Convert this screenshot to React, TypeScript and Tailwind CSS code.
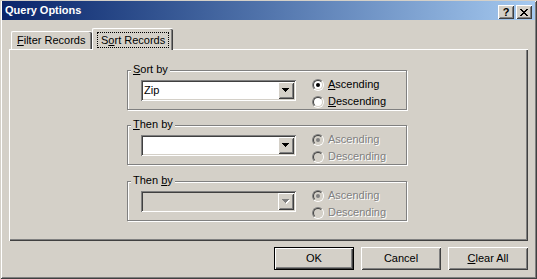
import React from "react";

const raised =
  "shadow-[inset_1px_1px_0_#fff,inset_-1px_-1px_0_#404040,inset_2px_2px_0_#d4d0c8,inset_-2px_-2px_0_#808080]";
const sunken =
  "shadow-[inset_1px_1px_0_#808080,inset_-1px_-1px_0_#fff,inset_2px_2px_0_#404040,inset_-2px_-2px_0_#d4d0c8]";
const disabledText = "text-[#808080] [text-shadow:1px_1px_0_#fff]";

function Pixels({ rows, color, x = 0, y = 0 }: { rows: string[]; color: string; x?: number; y?: number }) {
  const rects: React.ReactElement[] = [];
  rows.forEach((r, j) => {
    for (let i = 0; i < r.length; i++) {
      if (r[i] === "X") rects.push(<rect key={`${i}-${j}`} x={x + i} y={y + j} width={1} height={1} fill={color} />);
    }
  });
  return <>{rects}</>;
}

const arrowRows = ["XXXXXXX", ".XXXXX.", "..XXX..", "...X..."];
const closeRows = ["XX....XX", ".XX..XX.", "..XXXX..", "...XX...", "..XXXX..", ".XX..XX.", "XX....XX"];

function TitleBtn({ children }: { children: React.ReactNode }) {
  return (
    <div className={`w-[16px] h-[14px] bg-[#d4d0c8] flex items-center justify-center ${raised}`}>{children}</div>
  );
}

function Radio({ checked, disabled }: { checked?: boolean; disabled?: boolean }) {
  return (
    <span className="relative block w-[12px] h-[12px] shrink-0 rounded-full border border-t-[#808080] border-l-[#808080] border-r-white border-b-white">
      <span
        className={`absolute inset-0 rounded-full border border-t-[#404040] border-l-[#404040] border-r-[#d4d0c8] border-b-[#d4d0c8] ${
          disabled ? "bg-[#d4d0c8]" : "bg-white"
        }`}
      />
      {checked && (
        <span
          className={`absolute left-[3px] top-[3px] w-[4px] h-[4px] rounded-full ${
            disabled ? "bg-[#808080]" : "bg-black"
          }`}
        />
      )}
    </span>
  );
}

function Combo({ value, disabled }: { value?: string; disabled?: boolean }) {
  return (
    <div className={`w-[155px] h-[21px] flex p-[2px] mt-[9px] ${sunken} ${disabled ? "bg-[#d4d0c8]" : "bg-white"}`}>
      <div className="flex-1 pl-[1px] leading-[17px]">{value}</div>
      <div className={`w-[16px] h-[17px] flex items-center justify-center bg-[#d4d0c8] ${raised}`}>
        <svg width="8" height="5" className="block">
          {disabled ? (
            <>
              <Pixels rows={arrowRows} color="#ffffff" x={1} y={1} />
              <Pixels rows={arrowRows} color="#808080" />
            </>
          ) : (
            <Pixels rows={arrowRows} color="#000000" />
          )}
        </svg>
      </div>
    </div>
  );
}

function RadioRow({
  label,
  checked,
  disabled,
}: {
  label: React.ReactNode;
  checked?: boolean;
  disabled?: boolean;
}) {
  return (
    <div className="flex items-center h-[17px] gap-[4px]">
      <Radio checked={checked} disabled={disabled} />
      <span className={disabled ? disabledText : ""}>{label}</span>
    </div>
  );
}

function Group({
  legend,
  value,
  comboDisabled,
  radiosDisabled,
  className,
}: {
  legend: React.ReactNode;
  value?: string;
  comboDisabled?: boolean;
  radiosDisabled?: boolean;
  className?: string;
}) {
  return (
    <div
      className={`relative w-[280px] h-[40px] border border-[#808080] shadow-[inset_1px_1px_0_#fff,1px_1px_0_#fff] flex items-start pl-[13px] ${
        className ?? ""
      }`}
    >
      <span className="absolute left-[3px] top-[-8px] px-[2px] leading-[13px] bg-[#d4d0c8]">{legend}</span>
      <Combo value={value} disabled={comboDisabled} />
      <div className="flex flex-col ml-[16px] mt-[5px]">
        <RadioRow
          checked
          disabled={radiosDisabled}
          label={
            radiosDisabled ? (
              "Ascending"
            ) : (
              <>
                <span className="underline">A</span>scending
              </>
            )
          }
        />
        <RadioRow
          disabled={radiosDisabled}
          label={
            radiosDisabled ? (
              "Descending"
            ) : (
              <>
                <span className="underline">D</span>escending
              </>
            )
          }
        />
      </div>
    </div>
  );
}

function Button({ children, isDefault }: { children: React.ReactNode; isDefault?: boolean }) {
  return (
    <div
      className={`w-[80px] h-[23px] flex items-center justify-center bg-[#d4d0c8] ${
        isDefault
          ? "border border-black shadow-[inset_1px_1px_0_#fff,inset_-1px_-1px_0_#404040,inset_-2px_-2px_0_#808080]"
          : raised
      }`}
    >
      {children}
    </div>
  );
}

export default function App() {
  return (
    <div className="w-[537px] h-[279px] bg-[#d4d0c8] font-['Liberation_Sans',Arial,sans-serif] text-[11px] text-black flex flex-col px-[2px] pt-[1px] overflow-hidden shadow-[inset_1px_1px_0_#d4d0c8,inset_-1px_-1px_0_#404040,inset_2px_2px_0_#fff,inset_-2px_-2px_0_#808080]">
      {/* Title bar */}
      <div className="h-[19px] flex items-center bg-linear-to-r from-[#0a246a] to-[#a6caf0] pl-[3px] pr-[3px]">
        <span className="flex-1 font-bold text-white text-[11px] leading-[13px]">Query Options</span>
        <div className="flex gap-[2px] self-end mb-[1px]">
          <TitleBtn>
            <span className="font-bold text-[11px] leading-[11px] text-black">?</span>
          </TitleBtn>
          <TitleBtn>
            <svg width="8" height="7" className="block">
              <Pixels rows={closeRows} color="#000000" />
            </svg>
          </TitleBtn>
        </div>
      </div>

      {/* Body */}
      <div className="flex flex-col px-[7px]">
        {/* Tabs */}
        <div className="flex items-end h-[21px] mt-[8px] pl-[2px]">
          <div className="w-[81px] h-[18px] flex items-center pl-[5px] border-l border-t border-white rounded-tl-[2px] rounded-tr-[2px] shadow-[inset_-1px_0_0_#404040,inset_-2px_0_0_#808080]">
            <span>
              <span className="underline">F</span>ilter Records
            </span>
          </div>
          <div className="relative z-10 w-[81px] h-[22px] mb-[-1px] flex items-start pt-[3px] pl-[4px] bg-[#d4d0c8] border-l border-t border-white rounded-tl-[2px] rounded-tr-[2px] shadow-[inset_-1px_0_0_#404040,inset_-2px_0_0_#808080]">
            <span className="border border-dotted border-black px-[3px] h-[16px] leading-[14px]">
              S<span className="underline">o</span>rt Records
            </span>
          </div>
        </div>

        {/* Panel */}
        <div className="h-[192px] flex flex-col pl-[118px] pt-[21px] shadow-[inset_1px_1px_0_#fff,inset_-1px_-1px_0_#404040,inset_-2px_-2px_0_#808080]">
          <Group
            legend={
              <>
                <span className="underline">S</span>ort by
              </>
            }
            value="Zip"
          />
          <Group
            className="mt-[15px]"
            legend={
              <>
                <span className="underline">T</span>hen by
              </>
            }
            radiosDisabled
          />
          <Group
            className="mt-[16px]"
            legend={
              <>
                Then <span className="underline">b</span>y
              </>
            }
            comboDisabled
            radiosDisabled
          />
        </div>

        {/* Buttons */}
        <div className="flex justify-end gap-[7px] mt-[6px]">
          <Button isDefault>OK</Button>
          <Button>Cancel</Button>
          <Button>
            <span>
              <span className="underline">C</span>lear All
            </span>
          </Button>
        </div>
      </div>
    </div>
  );
}
